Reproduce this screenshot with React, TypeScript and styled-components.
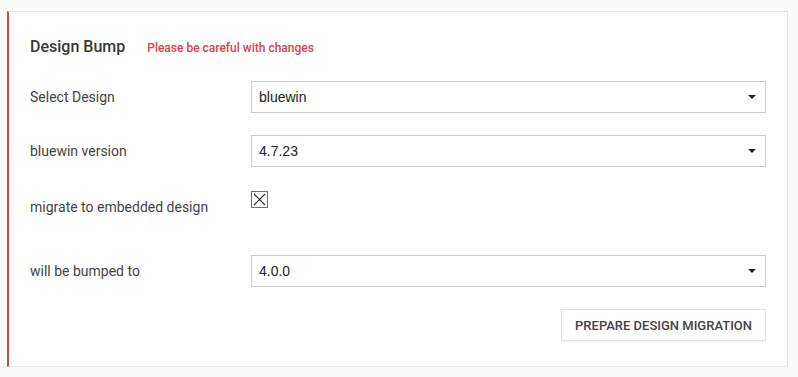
import React from 'react';
import styled, { createGlobalStyle } from 'styled-components';

const GlobalStyle = createGlobalStyle`
  html, body {
    margin: 0;
    padding: 0;
    background: #fbfbf7;
    font-family: Roboto, "Liberation Sans", Arial, sans-serif;
  }
`;

const Page = styled.div`
  padding: 11px 10px 10px 7px;
`;

const Card = styled.section`
  box-sizing: border-box;
  width: 781px;
  height: 356px;
  background: #fff;
  border: 1px solid #e4e4e2;
  border-left: 2px solid #cf4646;
  padding: 24px 21px 0 21px;
  display: flex;
  flex-direction: column;
`;

const Header = styled.div`
  display: flex;
  align-items: baseline;
  gap: 22px;
  height: 22px;
  line-height: 22px;
  margin-bottom: 23px;
`;

const Title = styled.h2`
  margin: 0;
  font-size: 16px;
  font-weight: 500;
  color: #383838;
`;

const Warning = styled.span`
  font-size: 12px;
  font-weight: 500;
  color: #d9434b;
`;

const Form = styled.div`
  display: flex;
  flex-direction: column;
  gap: 22px;
`;

const Row = styled.div<{ $tall?: boolean }>`
  display: grid;
  grid-template-columns: 221px 1fr;
  align-items: center;
  min-height: ${({ $tall }) => ($tall ? '36px' : '32px')};
  margin-bottom: ${({ $tall }) => ($tall ? '8px' : '0')};
`;

const Label = styled.label`
  font-size: 14px;
  color: #444;
`;

const Select = styled.div`
  position: relative;
  box-sizing: border-box;
  height: 32px;
  border: 1px solid #cdcdcd;
  background: #fff;
  padding: 0 30px 0 7px;
  display: flex;
  align-items: center;
  font-family: "Liberation Sans", Arial, sans-serif;
  font-size: 14px;
  color: #222;

  &::after {
    content: '';
    position: absolute;
    right: 9px;
    top: 13px;
    border-left: 4px solid transparent;
    border-right: 4px solid transparent;
    border-top: 4px solid #222;
  }
`;

const CheckBox = styled.div`
  align-self: start;
  margin-top: 2px;
  box-sizing: border-box;
  width: 17px;
  height: 17px;
  border: 1px solid #707070;
  display: flex;
  align-items: center;
  justify-content: center;
`;

const Actions = styled.div`
  display: flex;
  justify-content: flex-end;
`;

const Button = styled.button`
  box-sizing: border-box;
  height: 32px;
  padding: 0 13px;
  background: #fff;
  border: 1px solid #e2e2e2;
  box-shadow: 0 1px 1px rgba(0, 0, 0, 0.04);
  font-family: inherit;
  font-size: 13px;
  font-weight: 500;
  color: #444;
  cursor: pointer;
`;

const fields = [
  { label: 'Select Design', value: 'bluewin' },
  { label: 'bluewin version', value: '4.7.23' },
];

export default function App() {
  return (
    <>
      <GlobalStyle />
      <Page>
        <Card>
          <Header>
            <Title>Design Bump</Title>
            <Warning>Please be careful with changes</Warning>
          </Header>
          <Form>
            {fields.map((f) => (
              <Row key={f.label}>
                <Label>{f.label}</Label>
                <Select>{f.value}</Select>
              </Row>
            ))}
            <Row $tall>
              <Label>migrate to embedded design</Label>
              <CheckBox>
                <svg width="13" height="13" viewBox="0 0 13 13">
                  <path d="M1 1 L12 12 M12 1 L1 12" stroke="#333" strokeWidth="1.2" fill="none" />
                </svg>
              </CheckBox>
            </Row>
            <Row>
              <Label>will be bumped to</Label>
              <Select>4.0.0</Select>
            </Row>
            <Actions>
              <Button>PREPARE DESIGN MIGRATION</Button>
            </Actions>
          </Form>
        </Card>
      </Page>
    </>
  );
}
